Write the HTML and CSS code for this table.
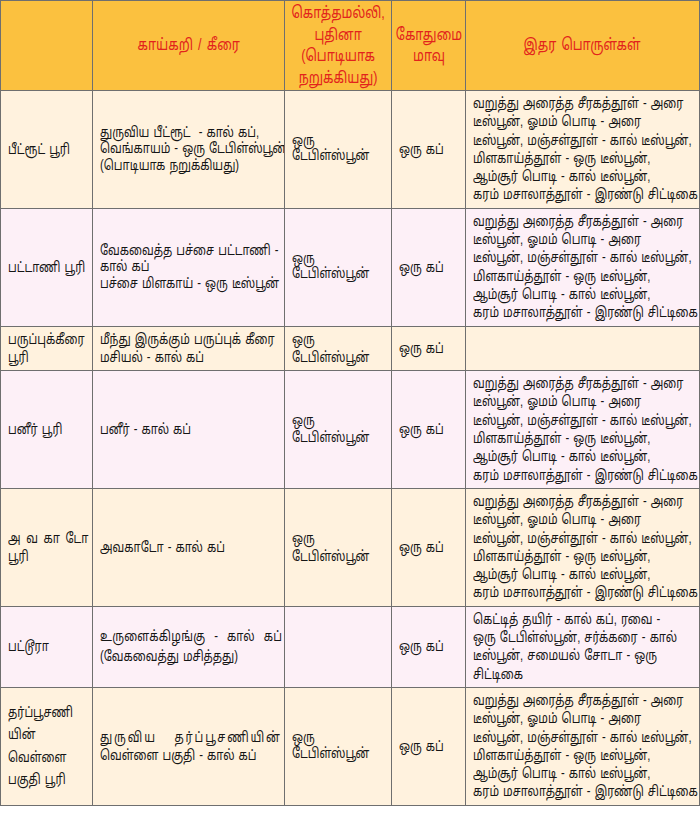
FILE: index.html
```html
<!DOCTYPE html>
<html lang="ta">
<head>
<meta charset="utf-8">
<title>பூரி வகைகள்</title>
<link rel="stylesheet" href="styles.css">
</head>
<body>
<table class="recipe">
  <colgroup>
    <col class="c1"><col class="c2"><col class="c3"><col class="c4"><col class="c5">
  </colgroup>
  <thead>
    <tr>
      <th></th>
      <th><div class="hc"><span class="h">காய்கறி / கீரை</span></div></th>
      <th><div class="hc"><span class="h">கொத்தமல்லி,<br>புதினா<br>(பொடியாக<br>நறுக்கியது)</span></div></th>
      <th><div class="hc"><span class="h">கோதுமை<br>மாவு</span></div></th>
      <th><div class="hc"><span class="h">இதர பொருள்கள்</span></div></th>
    </tr>
  </thead>
  <tbody>
    <tr class="cream">
      <td><div class="t">பீட்ரூட் பூரி</div></td>
      <td><div class="t tight">துருவிய பீட்ரூட்&nbsp; - கால் கப்,<br>வெங்காயம் - ஒரு டேபிள்ஸ்பூன்<br>(பொடியாக நறுக்கியது)</div></td>
      <td><div class="t tighter">ஒரு<br>டேபிள்ஸ்பூன்</div></td>
      <td><div class="t">ஒரு கப்</div></td>
      <td><div class="t">வறுத்து அரைத்த சீரகத்தூள் - அரை<br>டீஸ்பூன், ஓமம் பொடி - அரை<br>டீஸ்பூன், மஞ்சள்தூள் - கால் டீஸ்பூன்,<br>மிளகாய்த்தூள் - ஒரு டீஸ்பூன்,<br>ஆம்சூர் பொடி - கால் டீஸ்பூன்,<br>கரம் மசாலாத்தூள் - இரண்டு சிட்டிகை</div></td>
    </tr>
    <tr class="pink">
      <td><div class="t">பட்டாணி பூரி</div></td>
      <td><div class="t tight">வேகவைத்த பச்சை பட்டாணி -<br>கால் கப்<br>பச்சை மிளகாய் - ஒரு டீஸ்பூன்</div></td>
      <td><div class="t tighter">ஒரு<br>டேபிள்ஸ்பூன்</div></td>
      <td><div class="t">ஒரு கப்</div></td>
      <td><div class="t">வறுத்து அரைத்த சீரகத்தூள் - அரை<br>டீஸ்பூன், ஓமம் பொடி - அரை<br>டீஸ்பூன், மஞ்சள்தூள் - கால் டீஸ்பூன்,<br>மிளகாய்த்தூள் - ஒரு டீஸ்பூன்,<br>ஆம்சூர் பொடி - கால் டீஸ்பூன்,<br>கரம் மசாலாத்தூள் - இரண்டு சிட்டிகை</div></td>
    </tr>
    <tr class="cream">
      <td><div class="t">பருப்புக்கீரை<br>பூரி</div></td>
      <td><div class="t">மீந்து இருக்கும் பருப்புக் கீரை<br>மசியல் - கால் கப்</div></td>
      <td><div class="t">ஒரு<br>டேபிள்ஸ்பூன்</div></td>
      <td><div class="t">ஒரு கப்</div></td>
      <td></td>
    </tr>
    <tr class="pink">
      <td><div class="t">பனீர் பூரி</div></td>
      <td><div class="t">பனீர் - கால் கப்</div></td>
      <td><div class="t tight">ஒரு<br>டேபிள்ஸ்பூன்</div></td>
      <td><div class="t">ஒரு கப்</div></td>
      <td><div class="t">வறுத்து அரைத்த சீரகத்தூள் - அரை<br>டீஸ்பூன், ஓமம் பொடி - அரை<br>டீஸ்பூன், மஞ்சள்தூள் - கால் டீஸ்பூன்,<br>மிளகாய்த்தூள் - ஒரு டீஸ்பூன்,<br>ஆம்சூர் பொடி - கால் டீஸ்பூன்,<br>கரம் மசாலாத்தூள் - இரண்டு சிட்டிகை</div></td>
    </tr>
    <tr class="cream">
      <td><div class="t"><span class="spread">அவகாடோ</span><br>பூரி</div></td>
      <td><div class="t">அவகாடோ - கால் கப்</div></td>
      <td><div class="t">ஒரு<br>டேபிள்ஸ்பூன்</div></td>
      <td><div class="t">ஒரு கப்</div></td>
      <td><div class="t">வறுத்து அரைத்த சீரகத்தூள் - அரை<br>டீஸ்பூன், ஓமம் பொடி - அரை<br>டீஸ்பூன், மஞ்சள்தூள் - கால் டீஸ்பூன்,<br>மிளகாய்த்தூள் - ஒரு டீஸ்பூன்,<br>ஆம்சூர் பொடி - கால் டீஸ்பூன்,<br>கரம் மசாலாத்தூள் - இரண்டு சிட்டிகை</div></td>
    </tr>
    <tr class="pink">
      <td><div class="t">பட்டூரா</div></td>
      <td><div class="t loose"><span class="spread3">உருளைக்கிழங்கு&nbsp; -&nbsp; கால்&nbsp; கப்</span><br>(வேகவைத்து மசித்தது)</div></td>
      <td></td>
      <td><div class="t">ஒரு கப்</div></td>
      <td><div class="t">கெட்டித் தயிர் - கால் கப், ரவை -<br>ஒரு டேபிள்ஸ்பூன், சர்க்கரை - கால்<br>டீஸ்பூன், சமையல் சோடா - ஒரு<br>சிட்டிகை</div></td>
    </tr>
    <tr class="cream">
      <td><div class="t airy">தர்ப்பூசணி<br>யின்<br>வெள்ளை<br>பகுதி பூரி</div></td>
      <td><div class="t"><span class="spread2">துருவிய&nbsp;&nbsp; தர்ப்பூசணியின்</span><br>வெள்ளை பகுதி - கால் கப்</div></td>
      <td><div class="t tight">ஒரு<br>டேபிள்ஸ்பூன்</div></td>
      <td><div class="t">ஒரு கப்</div></td>
      <td><div class="t">வறுத்து அரைத்த சீரகத்தூள் - அரை<br>டீஸ்பூன், ஓமம் பொடி - அரை<br>டீஸ்பூன், மஞ்சள்தூள் - கால் டீஸ்பூன்,<br>மிளகாய்த்தூள் - ஒரு டீஸ்பூன்,<br>ஆம்சூர் பொடி - கால் டீஸ்பூன்,<br>கரம் மசாலாத்தூள் - இரண்டு சிட்டிகை</div></td>
    </tr>
  </tbody>
</table>
</body>
</html>
```
FILE: styles.css
```css
html, body {
  margin: 0;
  padding: 0;
  background: #ffffff;
}

.recipe {
  border-collapse: collapse;
  table-layout: fixed;
  width: 699px;
  font-family: "Liberation Sans", "Noto Sans Tamil", "Lohit Tamil", "Noto Sans", sans-serif;
  font-size: 14px;
  line-height: 18.3px;
  color: #161616;
}

.c1 { width: 92px; }
.c2 { width: 192px; }
.c3 { width: 107px; }
.c4 { width: 74px; }
.c5 { width: 234px; }

.recipe th,
.recipe td {
  border: 1px solid #6f6f6f;
  vertical-align: middle;
  text-align: left;
  padding: 3px 7px 4px 7px;
  overflow: hidden;
}

.recipe th {
  background: #fbc13f;
  color: #e2231c;
  font-weight: normal;
  font-size: 16px;
  line-height: 21.5px;
  padding: 1px 4px 2px 4px;
}

/* condensed text, as in the printed table */
.t {
  display: inline-block;
  white-space: nowrap;
  word-spacing: 1.2px;
  transform: scaleX(0.8);
  transform-origin: 0 50%;
}

.hc {
  display: flex;
  justify-content: center;
}

.h {
  display: block;
  white-space: nowrap;
  text-align: center;
  word-spacing: 2px;
  transform: scaleX(0.79);
  transform-origin: 50% 50%;
}

.tight { line-height: 16.5px; }
.tighter { line-height: 15.5px; }
.loose { line-height: 20px; }
.airy { line-height: 22.5px; }

.cream td { background: #fff2de; }
.pink td { background: #fdf0f7; }

.spread { letter-spacing: 7px; }
.spread2 { letter-spacing: 2.3px; }
.spread3 { letter-spacing: 0.4px; }
```
